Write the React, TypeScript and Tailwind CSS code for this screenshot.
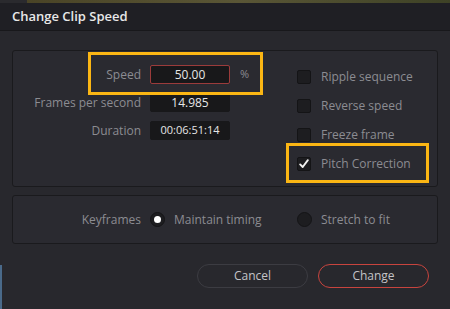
import React from "react";

const font = { fontFamily: '"Open Sans", "Noto Sans", sans-serif' };

function Check({ checked }: { checked?: boolean }) {
  return (
    <span className="flex h-[14px] w-[14px] items-center justify-center rounded-[2px] border border-[#141416] bg-[#1d1d20]">
      {checked && (
        <svg viewBox="0 0 14 14" className="h-[12px] w-[12px]">
          <path d="M2.5 7.5 L5.5 10.5 L11.5 2.5" fill="none" stroke="#f2f2f2" strokeWidth={2.2} strokeLinecap="round" strokeLinejoin="round" />
        </svg>
      )}
    </span>
  );
}

function Radio({ on }: { on?: boolean }) {
  return (
    <span className="flex h-[15px] w-[15px] items-center justify-center rounded-full border border-[#141416] bg-[#1d1d20]">
      {on && <span className="h-[7px] w-[7px] rounded-full bg-white" />}
    </span>
  );
}

function Field({ value, red, small }: { value: string; red?: boolean; small?: boolean }) {
  return (
    <div
      className={`flex h-[19px] w-[80px] items-center justify-center rounded-[2px] border bg-[#18181a] ${
        red ? "border-[#9b3b3b]" : "border-[#18181a]"
      } ${small ? "text-[11px]" : "text-[12px]"} text-[#e6e6e6]`}
    >
      {value}
    </div>
  );
}

export default function App() {
  const rows = [
    { label: "Speed", value: "50.00", red: true },
    { label: "Frames per second", value: "14.985" },
    { label: "Duration", value: "00:06:51:14", small: true },
  ];
  const checks = ["Ripple sequence", "Reverse speed", "Freeze frame"];

  return (
    <div className="relative h-[309px] w-[450px] overflow-hidden bg-[#28282d]" style={font}>
      <div className="flex h-[3px]">
        <div className="w-[27px] bg-[#2a2a2e]" />
        <div className="flex-1 bg-gradient-to-r from-[#4a4426] via-[#5a5636] to-[#3e4226]" />
      </div>
      <div className="absolute bottom-0 left-0 h-[44px] w-[2px] bg-[#4a6a8a]" />
      <div className="flex h-[28px] items-center border-b border-[#18181b] bg-[#1f1f24] pl-[12px] text-[13px] font-semibold text-[#e8e8e8]">
        Change Clip Speed
      </div>
      <div className="px-[12px] pt-[19px]">
        <div className="relative flex h-[137px] rounded-[3px] border border-[#1a1a1d] bg-[#2a2a30] pt-[14px]">
          <div className="flex w-[270px] flex-col gap-[9px]">
            {rows.map((r) => (
              <div key={r.label} className="flex h-[19px] items-center">
                <span className="w-[128px] text-right text-[12px] text-[#8c8c92]">{r.label}</span>
                <span className="ml-[9px]">
                  <Field value={r.value} red={r.red} small={r.small} />
                </span>
                {r.red && <span className="ml-[10px] text-[11px] text-[#8c8c92]">%</span>}
              </div>
            ))}
          </div>
          <div className="flex flex-col gap-[10px] pl-[14px] pt-[2px]">
            {checks.map((c) => (
              <div key={c} className="flex h-[19px] items-center gap-[10px]">
                <Check />
                <span className="text-[12px] text-[#8c8c92]">{c}</span>
              </div>
            ))}
            <div className="flex h-[19px] items-center gap-[10px]">
              <Check checked />
              <span className="text-[12px] text-[#8c8c92]">Pitch Correction</span>
            </div>
          </div>
          <div className="absolute left-[75px] top-[1px] h-[43px] w-[175px] border-[3px] border-[#fbb614]" />
          <div className="absolute left-[273px] top-[92px] h-[40px] w-[143px] border-[3px] border-[#fbb614]" />
        </div>
        <div className="mt-[8px] flex h-[49px] items-center rounded-[3px] border border-[#1a1a1d] bg-[#2a2a30]">
          <span className="w-[128px] text-right text-[12px] text-[#8c8c92]">Keyframes</span>
          <span className="ml-[9px]">
            <Radio on />
          </span>
          <span className="ml-[9px] w-[123px] text-[12px] text-[#8c8c92]">Maintain timing</span>
          <Radio />
          <span className="ml-[9px] text-[12px] text-[#8c8c92]">Stretch to fit</span>
        </div>
        <div className="mt-[20px] flex justify-end gap-[10px] pr-[9px]">
          <button className="h-[24px] w-[111px] rounded-full border border-[#3c3c42] text-[12px] text-[#c4c4c8]">
            Cancel
          </button>
          <button className="h-[24px] w-[111px] rounded-full border border-[#c8443e] text-[12px] text-[#c4c4c8]">
            Change
          </button>
        </div>
      </div>
    </div>
  );
}
